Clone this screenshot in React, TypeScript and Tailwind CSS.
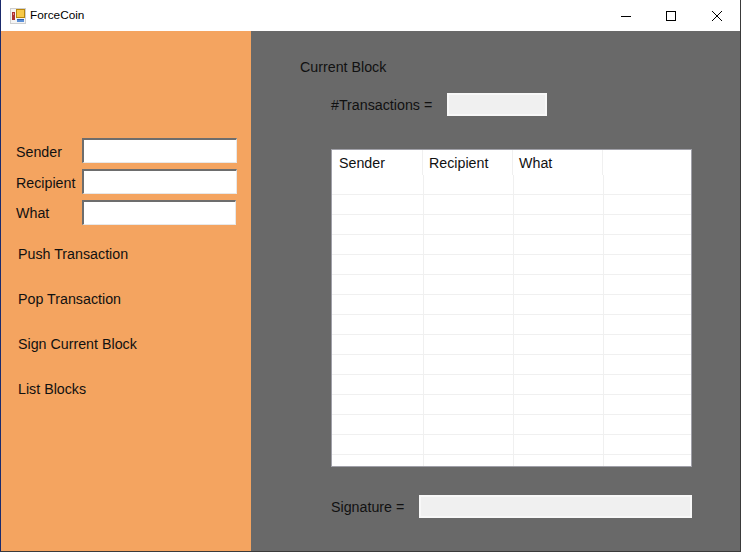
import React from "react";

const ROW_COUNT = 15;
const COLUMNS = ["Sender", "Recipient", "What", ""];
const FIELDS = ["Sender", "Recipient", "What"];
const ACTIONS = ["Push Transaction", "Pop Transaction", "Sign Current Block", "List Blocks"];

function AppIcon(): React.ReactElement {
  return (
    <svg width="16" height="16" viewBox="0 0 16 16" shapeRendering="crispEdges" className="block">
      <rect x="0" y="0" width="16" height="16" fill="#cfcfcf" />
      <rect x="1" y="1" width="14" height="14" fill="#f4f4f4" />
      <rect x="6" y="1" width="9" height="9" fill="#b8860b" />
      <rect x="7" y="2" width="7" height="7" fill="#f7c948" />
      <rect x="2" y="4" width="3" height="8" fill="#a33" />
      <rect x="3" y="5" width="1" height="2" fill="#e88" />
      <rect x="7" y="11" width="7" height="3" fill="#5b8fd6" />
      <rect x="7" y="11" width="7" height="1" fill="#2f5fa8" />
    </svg>
  );
}

function TitleBar(): React.ReactElement {
  return (
    <div className="flex h-[31px] shrink-0 items-center bg-white pl-[9px] text-[11.8px] text-black">
      <AppIcon />
      <span className="ml-[4px]">ForceCoin</span>
      <div className="ml-auto flex h-full items-center">
        <div className="flex h-full w-[45px] items-center justify-center">
          <svg width="10" height="10" viewBox="0 0 10 10" shapeRendering="crispEdges">
            <path d="M0 5H10" stroke="#000" />
          </svg>
        </div>
        <div className="flex h-full w-[46px] items-center justify-center">
          <svg width="10" height="10" viewBox="0 0 10 10" shapeRendering="crispEdges">
            <rect x="0.5" y="0.5" width="9" height="9" fill="none" stroke="#000" />
          </svg>
        </div>
        <div className="flex h-full w-[46px] items-center justify-center">
          <svg width="10" height="10" viewBox="0 0 10 10">
            <path d="M0 0L10 10M10 0L0 10" stroke="#000" strokeWidth="1" />
          </svg>
        </div>
      </div>
    </div>
  );
}

function Sidebar(): React.ReactElement {
  return (
    <div className="flex w-[250px] shrink-0 flex-col bg-[#f4a460] pt-[107px] pl-[15px]">
      <div className="flex flex-col gap-[6px]">
        {FIELDS.map((field, i) => (
          <div key={field} className="flex h-[25px] items-center">
            <span className={`w-[66px] ${i === 2 ? "pt-[1px]" : "pt-[3px]"}`}>{field}</span>
            <div
              className={`h-[25px] ${i === 2 ? "w-[154px]" : "w-[155px]"} border-t-2 border-r border-b border-l-2 border-t-[#6d6d6d] border-r-[#e8e8e8] border-b-[#e8e8e8] border-l-[#6d6d6d] bg-white`}
            />
          </div>
        ))}
      </div>
      <div className="mt-[7px] flex flex-col pl-[2px]">
        {ACTIONS.map((action) => (
          <div key={action} className="flex h-[45px] items-center">
            {action}
          </div>
        ))}
      </div>
    </div>
  );
}

function TransactionsTable(): React.ReactElement {
  return (
    <div className="flex h-[318px] w-[361px] flex-col overflow-hidden border-[1px] border-[#a0a0a8] bg-white">
      <div className="flex h-[25px] shrink-0">
        {COLUMNS.map((column, i) => (
          <div
            key={i}
            className={`flex h-[25px] shrink-0 items-center pt-[2px] ${i === 0 ? "w-[91px] pl-[7px]" : "w-[90px] pl-[6px]"} ${i < 3 ? "border-r border-[#f0f0f0]" : ""}`}
          >
            {column}
          </div>
        ))}
      </div>
      {Array.from({ length: ROW_COUNT }, (_, row) => (
        <div key={row} className="flex h-[20px] shrink-0 border-b border-[#f0f0f0]">
          {COLUMNS.map((_, i) => (
            <div
              key={i}
              className={`shrink-0 ${i === 0 ? "w-[92px]" : "w-[90px]"} ${i < 3 ? "border-r border-[#f0f0f0]" : ""}`}
            />
          ))}
        </div>
      ))}
    </div>
  );
}

function Content(): React.ReactElement {
  return (
    <div className="flex flex-1 flex-col bg-[#696969] pt-[26px] pl-[49px]">
      <div className="flex h-[20px] items-center">Current Block</div>
      <div className="mt-[16px] ml-[31px] flex h-[23px] items-center">
        <span className="w-[116px] pt-[1px]">#Transactions =</span>
        <div className="h-[23px] w-[100px] border-2 border-[#f8f8f8] bg-[#f0f0f0]" />
      </div>
      <div className="mt-[33px] ml-[31px]">
        <TransactionsTable />
      </div>
      <div className="mt-[28px] ml-[31px] flex h-[23px] items-center">
        <span className="w-[88px] pt-[1px]">Signature =</span>
        <div className="h-[23px] w-[273px] border-2 border-[#f8f8f8] bg-[#f0f0f0]" />
      </div>
    </div>
  );
}

export default function App(): React.ReactElement {
  return (
    <div className="flex h-[552px] w-[741px] flex-col overflow-hidden border-r border-b border-l border-[#3a3a3a] border-l-[#1a2a6c] font-['Liberation_Sans',sans-serif] text-[14.25px] leading-none text-[#111]">
      <TitleBar />
      <div className="flex min-h-0 flex-1">
        <Sidebar />
        <Content />
      </div>
    </div>
  );
}
